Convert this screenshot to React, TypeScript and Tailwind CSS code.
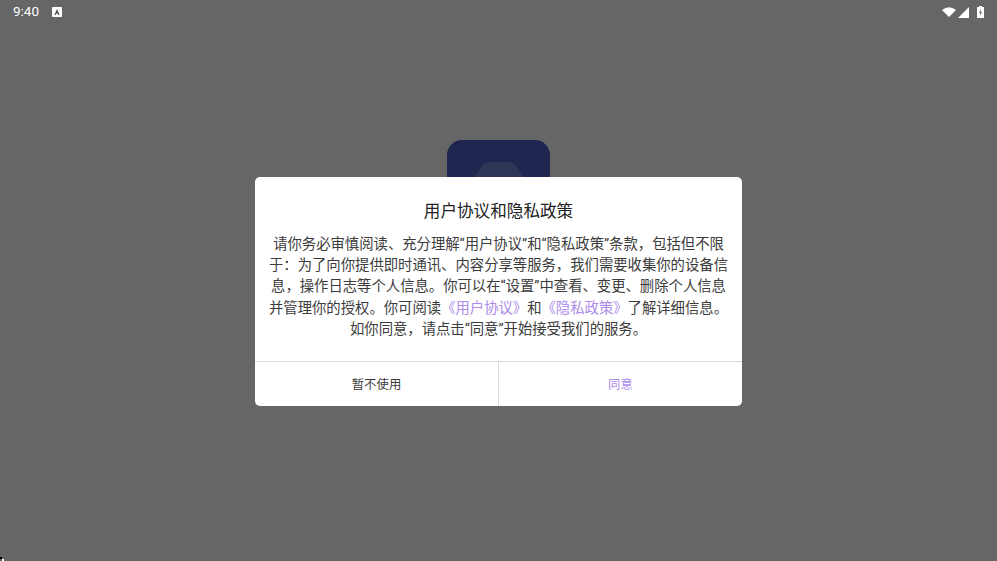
export default function App() {
  return (
    <div className="relative flex h-[561px] w-[997px] flex-col items-center overflow-hidden bg-[#666666] font-['Roboto','Noto_Sans_CJK_SC',sans-serif]">
      {/* Status bar */}
      <div className="flex h-6 w-full items-center justify-between pl-[13px] pr-[13px] text-white">
        <div className="flex items-center gap-[13px]">
          <span className="text-[13.5px] leading-none">9:40</span>
          <span className="flex h-[10px] w-[10px] items-center justify-center rounded-[1px] bg-white">
            <svg viewBox="0 0 10 10" className="h-[10px] w-[10px]">
              <path d="M5 2 L7.6 8 H6.3 L5.8 6.7 H4.2 L3.7 8 H2.4 Z" fill="#555" />
            </svg>
          </span>
        </div>
        <div className="flex items-center">
          <svg viewBox="0 0 14 10" className="h-[10px] w-[14px]">
            <path d="M0 3 Q7 -2.5 14 3 L7 10 Z" fill="white" />
          </svg>
          <svg viewBox="0 0 11 11" className="ml-[2px] h-[11px] w-[11px]">
            <path d="M11 0 V11 H0 Z" fill="white" />
          </svg>
          <svg viewBox="0 0 7 12" className="ml-[8px] h-3 w-[7px]">
            <path d="M2 0 H5 V1 H7 V12 H0 V1 H2 Z" fill="white" />
            <path d="M4 3 L2 7 H3.3 L3 10 L5 6 H3.7 Z" fill="#666" />
          </svg>
        </div>
      </div>

      {/* Logo behind the dialog */}
      <div className="mt-[116px] flex h-[103px] w-[103px] justify-center rounded-[15px] bg-[#1f2750] pt-[22px]">
        <svg viewBox="0 0 80 30" className="h-[30px] w-[80px]">
          <path d="M23 4 Q25 0 29 0 H51 Q55 0 57 4 L74 30 H6 Z" fill="#2f3557" />
        </svg>
      </div>

      {/* Dialog */}
      <div className="absolute left-[255px] top-[177px] flex h-[229px] w-[487px] flex-col rounded-[5px] bg-white">
        <div className="flex flex-1 flex-col items-center px-3 pt-[23px]">
          <h2 className="text-[16.6px] font-normal leading-[23px] text-[#222222]">用户协议和隐私政策</h2>
          <p className="mt-[11px] w-[470px] text-center text-[14.35px] leading-[21.2px] text-[#3c3c3c]">
            请你务必审慎阅读、充分理解“用户协议”和“隐私政策”条款，包括但不限于：为了向你提供即时通讯、内容分享等服务，我们需要收集你的设备信息，操作日志等个人信息。你可以在“设置”中查看、变更、删除个人信息<br />
            并管理你的授权。你可阅读
            <span className="text-[#ac8bea]">《用户协议》</span>和
            <span className="text-[#ac8bea]">《隐私政策》</span>了解详细信息。<br />
            如你同意，请点击“同意”开始接受我们的服务。
          </p>
        </div>
        <div className="flex h-[45px] border-t border-[#d9d9d9] text-[12.4px]">
          <button className="flex-1 border-r border-[#d9d9d9] pt-[2px] text-[#3c3c3c]">暂不使用</button>
          <button className="flex-1 pt-[2px] text-[#ac8bea]">同意</button>
        </div>
      </div>

      {/* Corner artefact at the bottom left */}
      <svg viewBox="0 0 4 4" className="absolute bottom-0 left-0 h-1 w-1">
        <rect x="0" y="0" width="2" height="2" fill="#000" />
        <rect x="2" y="2" width="2" height="2" fill="#fff" />
      </svg>
    </div>
  );
}
